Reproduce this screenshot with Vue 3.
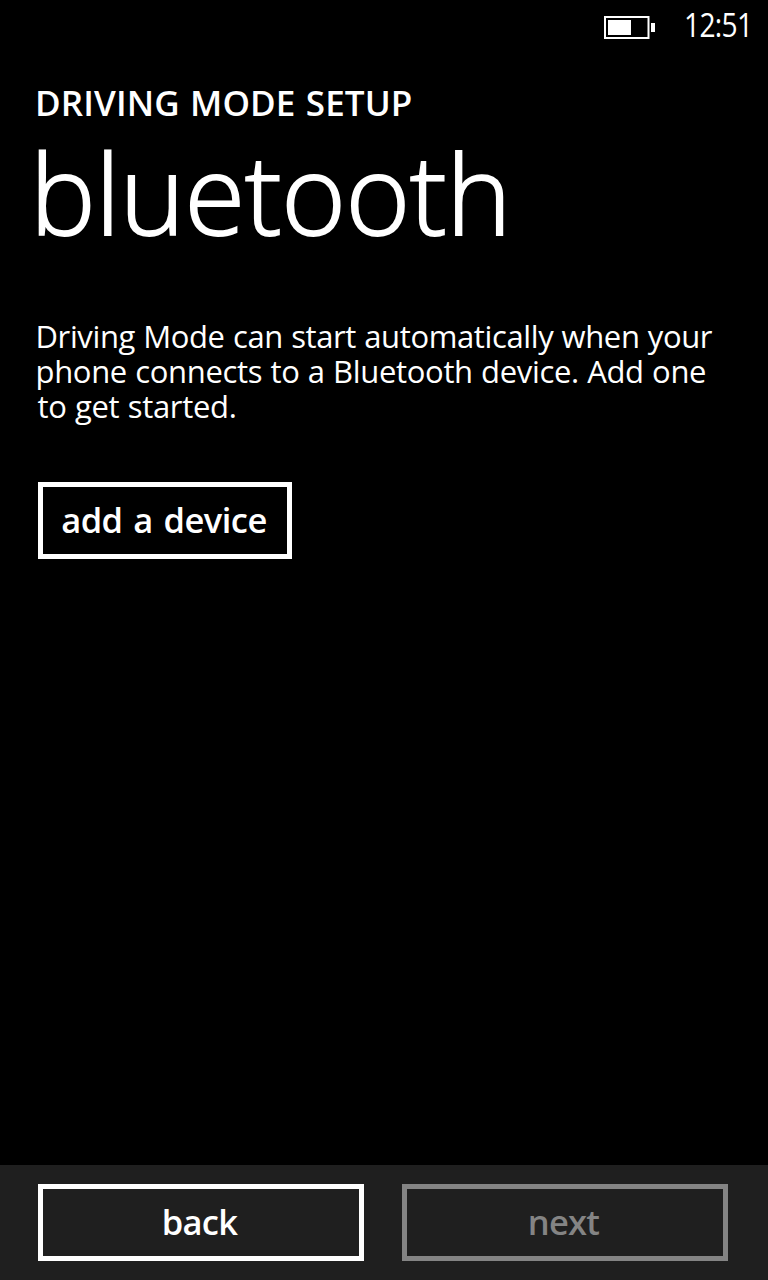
<script setup>
const lines = [
  'Driving Mode can start automatically when your',
  'phone connects to a Bluetooth device. Add one',
  'to get started.'
]
</script>

<template>
  <main class="phone">
    <header class="status">
      <svg class="battery" width="52" height="24" viewBox="0 0 52 24">
        <rect x="1" y="1" width="43.5" height="21" fill="none" stroke="#fff" stroke-width="2" />
        <rect x="4" y="4" width="23" height="15" fill="#fff" />
        <rect x="47" y="7" width="4" height="9" fill="#fff" />
      </svg>
      <span class="clock">12:51</span>
    </header>
    <h2 class="eyebrow">DRIVING MODE SETUP</h2>
    <h1 class="title">bluetooth</h1>
    <p class="copy">
      <span v-for="(line, i) in lines" :key="i" class="line" :class="'l' + i">{{ line }}</span>
    </p>
    <button class="btn add">add a device</button>
    <footer class="bar">
      <button class="btn back">back</button>
      <button class="btn next" disabled>next</button>
    </footer>
  </main>
</template>

<style>
body { background: #000; }
</style>

<style scoped>
.phone {
  box-sizing: border-box;
  width: 768px;
  height: 1280px;
  display: flex;
  flex-direction: column;
  background: #000;
  color: #fff;
  font-family: "Open Sans", "Noto Sans", sans-serif;
  overflow: hidden;
}
.status { display: flex; height: 50px; flex: none; }
.battery { margin: 16px 0 0 604px; flex: none; }
.clock {
  height: 40px;
  margin: 5px 0 0 28px;
  font-size: 32px;
  line-height: 40px;
  letter-spacing: -0.8px;
  white-space: nowrap;
  transform: scaleX(0.88);
  transform-origin: 0 0;
}
.eyebrow {
  height: 40px;
  margin: 33px 0 0 35px;
  font-size: 35px;
  line-height: 40px;
  font-weight: 600;
  letter-spacing: 0.1px;
  word-spacing: 1.2px;
  white-space: nowrap;
}
.title {
  height: 130px;
  margin: 4px 0 0 30px;
  font-size: 110.5px;
  line-height: 130px;
  font-weight: 300;
  letter-spacing: -0.5px;
  white-space: nowrap;
  -webkit-text-stroke: 1.8px #fff;
}
.copy { margin: 62px 0 0 35.5px; font-size: 31px; line-height: 35px; letter-spacing: -0.38px; word-spacing: 0.6px; }
.line { display: block; white-space: nowrap; }
.l1 { letter-spacing: -0.33px; }
.l2 { padding-left: 2px; letter-spacing: -0.3px; }
.btn {
  box-sizing: border-box;
  height: 77px;
  padding: 0 0 2px;
  border: 5px solid #fff;
  background: transparent;
  color: #fff;
  font-family: inherit;
  font-size: 34.5px;
  font-weight: 600;
  line-height: 60px;
  letter-spacing: -0.5px;
  word-spacing: 2.2px;
}
.add { width: 254px; margin: 58px 0 0 38px; padding-right: 2px; }
.bar {
  display: flex;
  gap: 38px;
  margin-top: auto;
  height: 115px;
  box-sizing: border-box;
  padding: 19px 40px 19px 38px;
  background: #1f1f1f;
}
.bar .btn { flex: 1; padding-right: 3px; letter-spacing: -0.7px; }
.bar .next { color: #848484; border-color: #848484; }
</style>
